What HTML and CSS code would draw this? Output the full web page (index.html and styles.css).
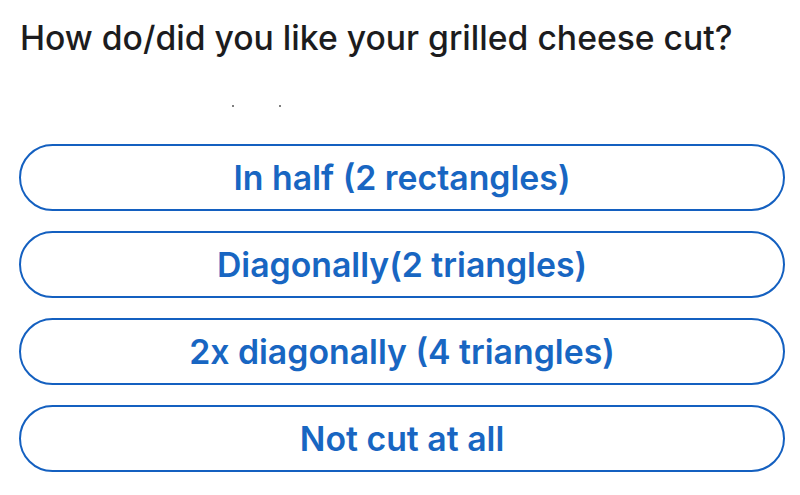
FILE: index.html
```html
<!DOCTYPE html>
<html>
<head>
<meta charset="utf-8">
<link rel="stylesheet" href="styles.css">
</head>
<body>
<div class="poll">
  <h1 class="question">How do/did you like your grilled cheese cut?</h1>
  <div class="dots"><span class="dot"></span><span class="dot"></span></div>
  <div class="options">
    <button class="option">In half (2 rectangles)</button>
    <button class="option">Diagonally(2 triangles)</button>
    <button class="option">2x diagonally (4 triangles)</button>
    <button class="option">Not cut at all</button>
  </div>
</div>
</body>
</html>
```
FILE: styles.css
```css
html, body {
  margin: 0;
  padding: 0;
  background: #ffffff;
}
.poll {
  width: 800px;
  height: 495px;
  box-sizing: border-box;
  padding: 18px 15px 0 19px;
  font-family: Inter, "Noto Sans", "Liberation Sans", sans-serif;
}
.question {
  margin: 0 0 0 1px;
  font-size: 33.7px;
  line-height: 40px;
  font-weight: 500;
  color: #1c1c1e;
  letter-spacing: 0;
}
.dots {
  height: 86px;
  display: flex;
  gap: 45px;
  padding-left: 213px;
  align-items: flex-start;
  padding-top: 47px;
  box-sizing: border-box;
}
.dot {
  width: 2px;
  height: 2px;
  background: #555;
  border-radius: 1px;
}
.options {
  display: flex;
  flex-direction: column;
  gap: 20px;
}
.option {
  height: 67px;
  width: 766px;
  box-sizing: border-box;
  border: 2px solid #1460c0;
  border-radius: 34px;
  background: #ffffff;
  color: #1866c2;
  font-family: Inter, "Noto Sans", "Liberation Sans", sans-serif;
  font-size: 33.8px;
  font-weight: 600;
  padding: 0;
  display: flex;
  align-items: center;
  justify-content: center;
}
```
